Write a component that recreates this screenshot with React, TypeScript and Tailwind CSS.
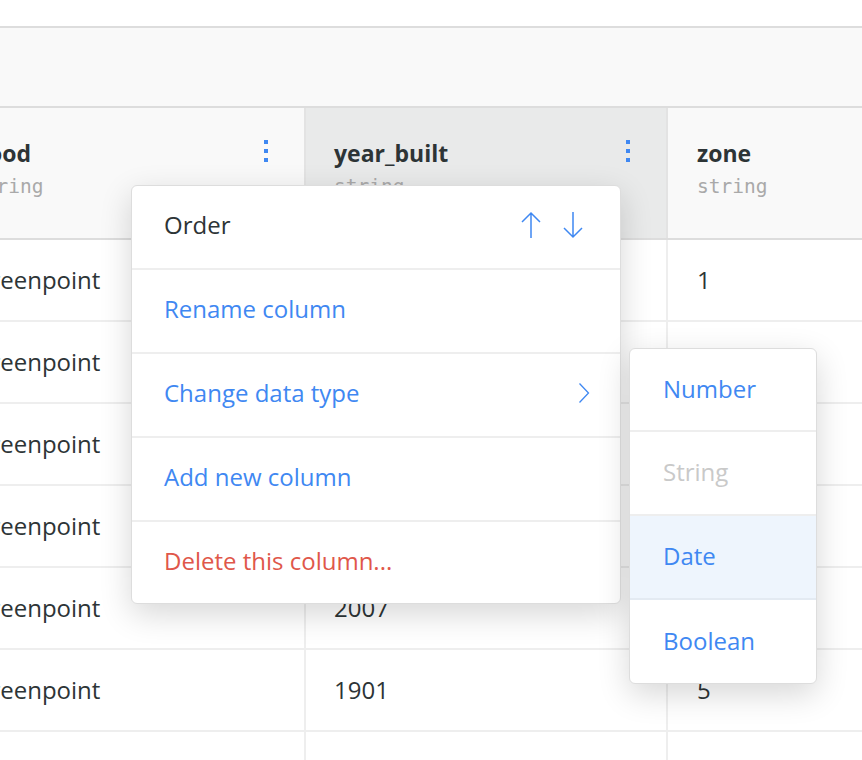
import React from 'react';

const rows = [
  { hood: 'Greenpoint', year: '1931', zone: '1' },
  { hood: 'Greenpoint', year: '1899', zone: '2' },
  { hood: 'Greenpoint', year: '1920', zone: '2' },
  { hood: 'Greenpoint', year: '1910', zone: '4' },
  { hood: 'Greenpoint', year: '2007', zone: '4' },
  { hood: 'Greenpoint', year: '1901', zone: '5' },
  { hood: '', year: '', zone: '' },
];

const Dots = () => (
  <div className="flex flex-col gap-[5px] pt-[32px]">
    <span className="block w-[4px] h-[4px] bg-[#3f88f2]" />
    <span className="block w-[4px] h-[4px] bg-[#3f88f2]" />
    <span className="block w-[4px] h-[4px] bg-[#3f88f2]" />
  </div>
);

const HeaderCell = ({ title, type, className, dots }: { title: string; type: string; className: string; dots?: boolean }) => (
  <div className={`flex justify-between h-[130px] ${className}`}>
    <div className="pt-[29px]">
      <div className="text-[23px] leading-[32px] font-bold text-[#2d3436]">{title}</div>
      <div className="mt-[5px] text-[19.5px] leading-[26px] text-[#a9a9a9] font-['DejaVu_Sans_Mono',monospace]">{type}</div>
    </div>
    {dots && <div className="pr-[36px]"><Dots /></div>}
  </div>
);

const ArrowUp = () => (
  <svg width="22" height="28" viewBox="0 0 22 28" fill="none" stroke="#3f88f2" strokeWidth="1.5">
    <path d="M11 27V2M2 11l9-9 9 9" />
  </svg>
);

const ArrowDown = () => (
  <svg width="22" height="28" viewBox="0 0 22 28" fill="none" stroke="#3f88f2" strokeWidth="1.5">
    <path d="M11 1v25M2 17l9 9 9-9" />
  </svg>
);

const Chevron = () => (
  <svg width="12" height="22" viewBox="0 0 12 22" fill="none" stroke="#3f88f2" strokeWidth="1.3">
    <path d="M1.5 1.5l9 9.5-9 9.5" />
  </svg>
);

export default function App() {
  return (
    <div className="relative w-[862px] h-[760px] overflow-hidden bg-white font-['Open_Sans',sans-serif]">
      <div className="h-[28px] bg-white border-b-2 border-[#dddddd]" />
      <div className="h-[80px] bg-[#f9f9f9] border-b-2 border-[#dddddd]" />

      <div className="ml-[-56px]">
        <div className="flex border-b-2 border-[#dddddd]">
          <HeaderCell title="hood" type="string" dots className="w-[362px] pl-[29px] bg-[#f9f9f9] border-r-2 border-[#e3e3e3]" />
          <HeaderCell title="year_built" type="string" dots className="w-[362px] pl-[28px] bg-[#e9eaea] border-r-2 border-[#e3e3e3]" />
          <HeaderCell title="zone" type="string" className="flex-1 pl-[29px] bg-[#f9f9f9]" />
        </div>
        {rows.map((r, i) => (
          <div key={i} className="flex h-[82px] border-b-2 border-[#eeeeee] text-[24px] text-[#2d3436]">
            <div className="w-[362px] pl-[29px] flex items-center border-r-2 border-[#eeeeee]">{r.hood}</div>
            <div className="w-[362px] pl-[28px] flex items-center border-r-2 border-[#eeeeee]">{r.year}</div>
            <div className="flex-1 pl-[29px] flex items-center">{r.zone}</div>
          </div>
        ))}
      </div>

      <div className="absolute left-[131px] top-[185px] w-[490px] bg-white border border-[#dddddd] rounded-[6px] shadow-[0_10px_32px_rgba(0,0,0,0.16)] text-[24px]">
        <div className="h-[84px] flex items-center justify-between pl-[32px] pr-[36px] pb-[4px] border-b-2 border-[#eeeeee] text-[#2d3436]">
          <span>Order</span>
          <div className="flex gap-[20px] items-center">
            <ArrowUp />
            <ArrowDown />
          </div>
        </div>
        <div className="h-[84px] flex items-center pl-[32px] pb-[4px] border-b-2 border-[#eeeeee] text-[#3f88f2]">Rename column</div>
        <div className="h-[84px] flex items-center justify-between pl-[32px] pr-[30px] pb-[4px] border-b-2 border-[#eeeeee] text-[#3f88f2]">
          <span>Change data type</span>
          <Chevron />
        </div>
        <div className="h-[84px] flex items-center pl-[32px] pb-[4px] border-b-2 border-[#eeeeee] text-[#3f88f2]">Add new column</div>
        <div className="h-[81px] flex items-center pl-[32px] pb-[4px] text-[#e0574a]">Delete this column...</div>
      </div>

      <div className="absolute left-[629px] top-[348px] w-[188px] bg-white border border-[#dddddd] rounded-[6px] shadow-[0_10px_32px_rgba(0,0,0,0.16)] text-[24px] overflow-hidden">
        <div className="h-[83px] flex items-center pl-[33px] pb-[2px] border-b-2 border-[#eeeeee] text-[#3f88f2]">Number</div>
        <div className="h-[84px] flex items-center pl-[33px] pb-[2px] border-b-2 border-[#eeeeee] text-[#c9c9c9]">String</div>
        <div className="h-[84px] flex items-center pl-[33px] pb-[2px] border-b-2 border-[#e3eaf2] bg-[#eef5fd] text-[#3f88f2]">Date</div>
        <div className="h-[83px] flex items-center pl-[33px] pb-[2px] text-[#3f88f2]">Boolean</div>
      </div>
    </div>
  );
}
